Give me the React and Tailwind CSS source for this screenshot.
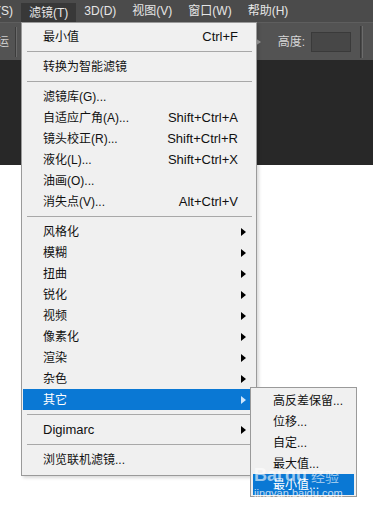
import React from "react";

const FONT = { fontFamily: '"Liberation Sans", "Noto Sans CJK SC", sans-serif' };

const TOP_MENU = [
  { label: "(S)" },
  { label: "滤镜(T)", open: true },
  { label: "3D(D)" },
  { label: "视图(V)" },
  { label: "窗口(W)" },
  { label: "帮助(H)" },
];

// "-" = separator
const FILTER_ITEMS = [
  { label: "最小值", shortcut: "Ctrl+F" },
  "-",
  { label: "转换为智能滤镜" },
  "-",
  { label: "滤镜库(G)..." },
  { label: "自适应广角(A)...", shortcut: "Shift+Ctrl+A" },
  { label: "镜头校正(R)...", shortcut: "Shift+Ctrl+R" },
  { label: "液化(L)...", shortcut: "Shift+Ctrl+X" },
  { label: "油画(O)..." },
  { label: "消失点(V)...", shortcut: "Alt+Ctrl+V" },
  "-",
  { label: "风格化", sub: true },
  { label: "模糊", sub: true },
  { label: "扭曲", sub: true },
  { label: "锐化", sub: true },
  { label: "视频", sub: true },
  { label: "像素化", sub: true },
  { label: "渲染", sub: true },
  { label: "杂色", sub: true },
  { label: "其它", sub: true, active: true },
  "-",
  { label: "Digimarc", sub: true, latin: true },
  "-",
  { label: "浏览联机滤镜..." },
];

const OTHER_ITEMS = [
  { label: "高反差保留..." },
  { label: "位移..." },
  { label: "自定..." },
  { label: "最大值..." },
  { label: "最小值...", active: true },
];

function Arrow({ light }) {
  return (
    <svg width="5" height="8" viewBox="0 0 5 8" className="shrink-0">
      <path d="M0 0 L5 4 L0 8 Z" fill={light ? "#cfe6fb" : "#000"} />
    </svg>
  );
}

function MenuItem({ item }) {
  return (
    <div
      className={`ml-[1px] mr-[5px] h-[21px] flex items-center pl-[20px] pr-[4px]
        ${item.active ? "bg-[#0a78d4] text-white" : "text-[#111]"}`}
    >
      <span className={item.latin ? "text-[13px]" : "text-[12px]"}>{item.label}</span>
      <span className="flex-1" />
      {item.shortcut && <span className="text-[13px] mr-[9px]">{item.shortcut}</span>}
      {item.sub && <span className="mr-[1px]"><Arrow light={item.active} /></span>}
    </div>
  );
}

function Separator() {
  return <div className="ml-[5px] mr-[4px] my-[4px] h-px bg-[#a8a8a8]" />;
}

export default function App() {
  return (
    <div className="relative w-[373px] h-[508px] overflow-hidden bg-white select-none" style={FONT}>
      {/* menu bar */}
      <div className="h-[22px] bg-[#4b4b4b] flex items-stretch -ml-[3px]">
        {TOP_MENU.map((m) => (
          <div
            key={m.label}
            className={`flex items-center text-[12px] text-[#e6e6e6]
              ${m.open ? "bg-[#383838] px-[8px] mt-[3px]" : "px-[8px]"}
              ${m.label === "(S)" ? "pl-0" : ""}`}
          >
            {m.label}
          </div>
        ))}
      </div>

      {/* options bar */}
      <div className="h-[38px] bg-[#535353] border-t border-[#5e5e5e] flex items-center">
        <span className="text-[12px] text-[#cfcfcf] -ml-[3px] w-[14px] overflow-hidden">运</span>
        <div className="ml-[4px] h-[30px] w-[2px] border-l border-[#3c3c3c] border-r-[#6a6a6a] border-r" />
        <div className="flex-1" />
        <svg width="6" height="8" viewBox="0 0 6 8" className="mr-[17px]">
          <path d="M0 0 L6 4 L0 8 Z" fill="#9a9a9a" />
        </svg>
        <span className="text-[12px] text-[#d6d6d6]">高度:</span>
        <div className="ml-[6px] w-[40px] h-[20px] bg-[#474747] border border-[#3a3a3a]" />
        <div className="ml-[9px] h-[32px] w-[3px] border-l border-[#3a3a3a] border-r border-r-[#6b6b6b] bg-[#4a4a4a]" />
        <div className="w-[10px]" />
      </div>

      {/* dark workspace strip */}
      <div className="h-[105px] bg-[#282828]" />

      {/* Filter menu */}
      <div className="absolute left-[21px] top-[22px] w-[236px] bg-[#f0f0f0] border border-[#9a9a9a] pt-[3px] pb-[5px] shadow-[2px_2px_3px_rgba(0,0,0,0.15)]">
        {FILTER_ITEMS.map((item, i) =>
          item === "-" ? <Separator key={i} /> : <MenuItem key={i} item={item} />
        )}
      </div>

      {/* Other submenu */}
      <div className="absolute left-[250px] top-[387px] w-[107px] bg-[#f0f0f0] border border-[#9a9a9a] pt-[2px] pb-[1px]">
        {OTHER_ITEMS.map((item, i) => (
          <div
            key={i}
            className={`mx-[2px] h-[21px] flex items-center pl-[20px] text-[12px]
              ${item.active ? "bg-[#0a78d4] text-white" : "text-[#111]"}`}
          >
            {item.label}
          </div>
        ))}
      </div>

      {/* watermark */}
      <div className="absolute left-[254px] top-[466px] flex flex-col items-start pointer-events-none">
        <div className="flex items-end leading-none text-white/60 font-bold">
          <span className="text-[18px]">Bai</span>
          <span className="text-[18px] ml-[3px]">du</span>
          <span className="text-[14px] ml-[4px] font-normal">经验</span>
        </div>
        <span className="text-[11px] leading-none mt-[4px] text-white/75">jingyan.baidu.com</span>
      </div>
    </div>
  );
}
